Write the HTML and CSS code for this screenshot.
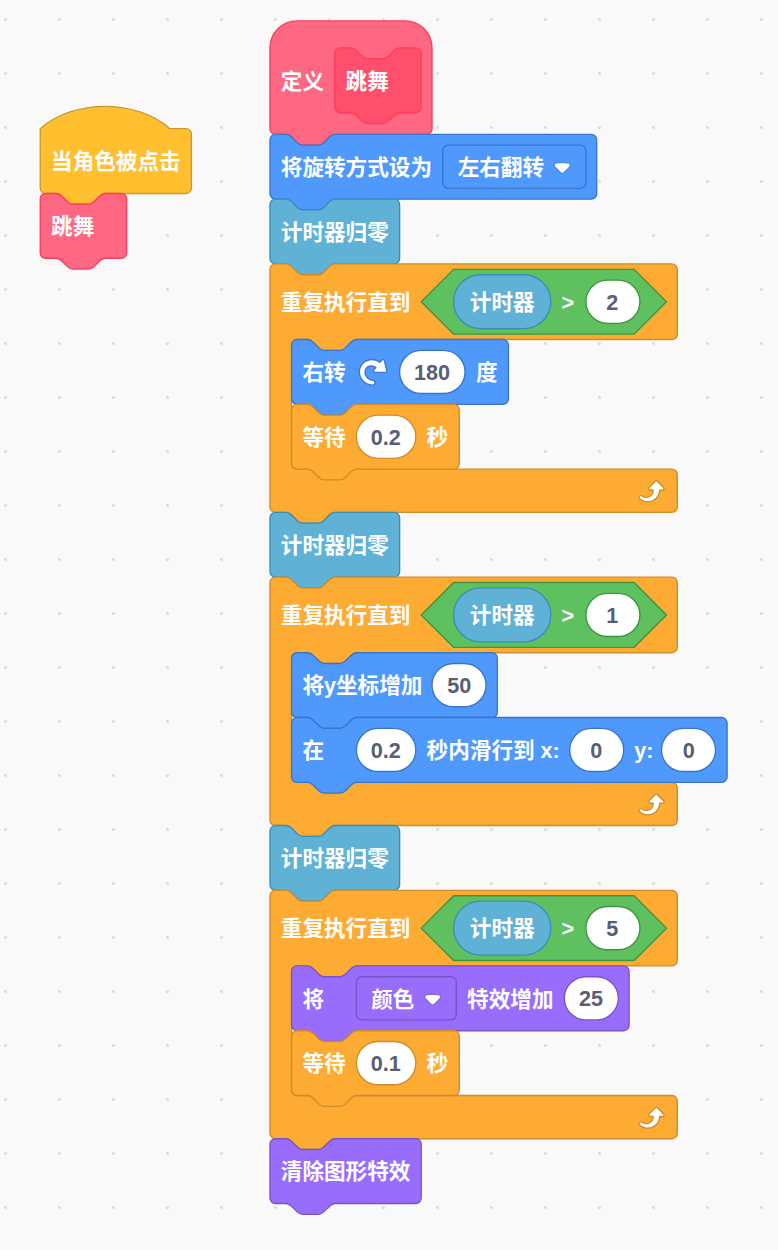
FILE: index.html
```html
<!DOCTYPE html>
<html lang="zh-CN">
<head>
<meta charset="utf-8">
<title>积木脚本</title>
<link rel="stylesheet" href="styles.css">
</head>
<body>
<svg class="defs" width="0" height="0" aria-hidden="true">
  <defs>
    <path id="stack-64" d="M0,4A4,4 0 0,1 4,0H12c2,0 3,1 4,2l4,4c1,1 2,2 4,2h12c2,0 3,-1 4,-2l4,-4c1,-1 2,-2 4,-2H60a4,4 0 0,1 4,4v40a4,4 0 0,1 -4,4H48c-2,0 -3,1 -4,2l-4,4c-1,1 -2,2 -4,2h-12c-2,0 -3,-1 -4,-2l-4,-4c-1,-1 -2,-2 -4,-2H4a4,4 0 0,1 -4,-4z"/>
    <path id="stack-96" d="M0,4A4,4 0 0,1 4,0H12c2,0 3,1 4,2l4,4c1,1 2,2 4,2h12c2,0 3,-1 4,-2l4,-4c1,-1 2,-2 4,-2H92a4,4 0 0,1 4,4v40a4,4 0 0,1 -4,4H48c-2,0 -3,1 -4,2l-4,4c-1,1 -2,2 -4,2h-12c-2,0 -3,-1 -4,-2l-4,-4c-1,-1 -2,-2 -4,-2H4a4,4 0 0,1 -4,-4z"/>
    <path id="stack-112" d="M0,4A4,4 0 0,1 4,0H12c2,0 3,1 4,2l4,4c1,1 2,2 4,2h12c2,0 3,-1 4,-2l4,-4c1,-1 2,-2 4,-2H108a4,4 0 0,1 4,4v40a4,4 0 0,1 -4,4H48c-2,0 -3,1 -4,2l-4,4c-1,1 -2,2 -4,2h-12c-2,0 -3,-1 -4,-2l-4,-4c-1,-1 -2,-2 -4,-2H4a4,4 0 0,1 -4,-4z"/>
    <path id="stack-124" d="M0,4A4,4 0 0,1 4,0H12c2,0 3,1 4,2l4,4c1,1 2,2 4,2h12c2,0 3,-1 4,-2l4,-4c1,-1 2,-2 4,-2H120.2a4,4 0 0,1 4,4v40a4,4 0 0,1 -4,4H48c-2,0 -3,1 -4,2l-4,4c-1,1 -2,2 -4,2h-12c-2,0 -3,-1 -4,-2l-4,-4c-1,-1 -2,-2 -4,-2H4a4,4 0 0,1 -4,-4z"/>
    <path id="loop-shape" d="M0,4A4,4 0 0,1 4,0H12c2,0 3,1 4,2l4,4c1,1 2,2 4,2h12c2,0 3,-1 4,-2l4,-4c1,-1 2,-2 4,-2H297.7a4,4 0 0,1 4,4v48a4,4 0 0,1 -4,4H64c-2,0 -3,1 -4,2l-4,4c-1,1 -2,2 -4,2h-12c-2,0 -3,-1 -4,-2l-4,-4c-1,-1 -2,-2 -4,-2h-8a4,4 0 0,0 -4,4v88a4,4 0 0,0 4,4H297.7a4,4 0 0,1 4,4v24a4,4 0 0,1 -4,4H48c-2,0 -3,1 -4,2l-4,4c-1,1 -2,2 -4,2h-12c-2,0 -3,-1 -4,-2l-4,-4c-1,-1 -2,-2 -4,-2H4a4,4 0 0,1 -4,-4z"/>
    <path id="hexagon" d="M24,0H157.7L181.7,24L157.7,48H24L0,24z"/>
    <rect id="pill-72" width="72" height="40" rx="20"/>
    <rect id="pill-40" width="40" height="32" rx="16"/>
    <rect id="pill-44" width="44" height="32" rx="16"/>
    <rect id="pill-48" width="48.5" height="32" rx="16"/>
  </defs>
  <symbol id="caret" viewBox="0 0 12.71 8.79">
    <path class="caret-shade" d="M12.71 2.44A2.41 2.41 0 0 1 12 4.16L8.08 8.08a2.45 2.45 0 0 1-3.45 0L.72 4.16A2.42 2.42 0 0 1 0 2.44 2.48 2.48 0 0 1 .71.71C1 .47 1.43 0 6.36 0s5.39.46 5.64.71a2.44 2.44 0 0 1 .71 1.73z"/>
    <path class="icon-face" d="M6.36 7.79a1.43 1.43 0 0 1-1-.42L1.42 3.45a1.44 1.44 0 0 1 0-2c.56-.56 9.31-.56 9.87 0a1.44 1.44 0 0 1 0 2L7.37 7.37a1.43 1.43 0 0 1-1.01.42z"/>
  </symbol>
  <symbol id="loop" viewBox="0 0 24 24">
    <path fill="#cf8b2c" d="M23.3,11c-0.3,0.6-0.9,1-1.5,1h-1.6c-0.1,1.3-0.5,2.5-1.1,3.6c-0.9,1.7-2.3,3.2-4.1,4.1c-1.7,0.9-3.6,1.2-5.5,0.9c-1.8-0.3-3.5-1.1-4.9-2.3c-0.7-0.7-0.7-1.9,0-2.6c0.6-0.6,1.6-0.7,2.3-0.2H7c0.9,0.6,1.9,0.9,2.9,0.9s1.9-0.3,2.7-0.9c1.1-0.8,1.8-2.1,1.8-3.5h-1.5c-0.9,0-1.7-0.7-1.7-1.7c0-0.4,0.2-0.9,0.5-1.2l4.4-4.4c0.7-0.6,1.7-0.6,2.4,0L23,9.2C23.5,9.7,23.6,10.4,23.3,11z"/>
    <path class="icon-face" d="M21.8,11h-2.6c0,1.5-0.3,2.9-1,4.2c-0.8,1.6-2.1,2.8-3.7,3.6c-1.5,0.8-3.3,1.1-4.9,0.8c-1.6-0.2-3.2-1-4.4-2.1c-0.4-0.3-0.4-0.9-0.1-1.2c0.3-0.4,0.9-0.4,1.2-0.1l0,0c1,0.7,2.2,1.1,3.4,1.1s2.3-0.3,3.3-1c0.9-0.6,1.6-1.5,2-2.6c0.3-0.9,0.4-1.8,0.2-2.8h-2.4c-0.4,0-0.7-0.3-0.7-0.7c0-0.2,0.1-0.3,0.2-0.4l4.4-4.4c0.3-0.3,0.7-0.3,0.9,0L22,9.8c0.3,0.3,0.4,0.6,0.3,0.9S22,11,21.8,11z"/>
  </symbol>
  <symbol id="turn-right" viewBox="0 0 24 24">
    <path fill="#3d79cc" d="M22.68,12.2a1.6,1.6,0,0,1-1.27.63H13.72a1.59,1.59,0,0,1-1.16-2.58l1.12-1.41a4.82,4.82,0,0,0-3.14-.77,4.31,4.31,0,0,0-2,.8,4.25,4.25,0,0,0-1.34,1.73,5.06,5.06,0,0,0,.54,4.62A5.58,5.58,0,0,0,12,17.74h0a2.26,2.26,0,0,1-.16,4.52A10.25,10.25,0,0,1,3.74,18,10.14,10.14,0,0,1,2.25,8.78,9.7,9.7,0,0,1,5.08,4.64,9.92,9.92,0,0,1,9.66,2.5a10.66,10.66,0,0,1,7.72,1.68l1.08-1.35a1.57,1.57,0,0,1,1.24-.6,1.6,1.6,0,0,1,1.54,1.21l1.7,7.37A1.57,1.57,0,0,1,22.68,12.2Z"/>
    <path class="icon-face" d="M21.38,11.83H13.77a.59.59,0,0,1-.43-1l1.75-2.19a5.9,5.9,0,0,0-4.7-1.58,5.07,5.07,0,0,0-4.11,3.17A6,6,0,0,0,7,15.77a6.51,6.51,0,0,0,5,2.92,1.31,1.31,0,0,1-.08,2.62,9.3,9.3,0,0,1-7.35-3.82A9.16,9.16,0,0,1,3.17,9.12,8.51,8.51,0,0,1,5.71,5.4,8.76,8.76,0,0,1,9.82,3.48a9.71,9.71,0,0,1,7.75,2.07l1.67-2.1a.59.59,0,0,1,1,.21L22,11.08A.59.59,0,0,1,21.38,11.83Z"/>
  </symbol>
</svg>

<main class="workspace">
  <section class="script script-event">
    <div class="block event">
      <svg class="shape" width="112" height="48"><path d="M0,0c25,-22 71,-22 96,0H108a4,4 0 0,1 4,4v40a4,4 0 0,1 -4,4H48c-2,0 -3,1 -4,2l-4,4c-1,1 -2,2 -4,2h-12c-2,0 -3,-1 -4,-2l-4,-4c-1,-1 -2,-2 -4,-2H4a4,4 0 0,1 -4,-4z"/></svg>
      <span class="label">当角色被点击</span>
    </div>
    <div class="block custom">
      <svg class="shape" width="64" height="48"><use href="#stack-64"/></svg>
      <span class="label">跳舞</span>
    </div>
  </section>

  <section class="script script-define">
    <div class="block define custom">
      <svg class="shape" width="120" height="84"><path d="M0,20a20,20 0 0,1 20,-20H100a20,20 0 0,1 20,20v60a4,4 0 0,1 -4,4H48c-2,0 -3,1 -4,2l-4,4c-1,1 -2,2 -4,2h-12c-2,0 -3,-1 -4,-2l-4,-4c-1,-1 -2,-2 -4,-2H4a4,4 0 0,1 -4,-4z"/></svg>
      <span class="label">定义</span>
      <div class="block prototype">
        <svg class="shape" width="64" height="48"><use href="#stack-64"/></svg>
        <span class="label">跳舞</span>
      </div>
    </div>

    <div class="block motion">
      <svg class="shape" width="242" height="48"><path d="M0,4A4,4 0 0,1 4,0H12c2,0 3,1 4,2l4,4c1,1 2,2 4,2h12c2,0 3,-1 4,-2l4,-4c1,-1 2,-2 4,-2H238a4,4 0 0,1 4,4v40a4,4 0 0,1 -4,4H48c-2,0 -3,1 -4,2l-4,4c-1,1 -2,2 -4,2h-12c-2,0 -3,-1 -4,-2l-4,-4c-1,-1 -2,-2 -4,-2H4a4,4 0 0,1 -4,-4z"/></svg>
      <span class="label">将旋转方式设为</span>
      <div class="dropdown">
        <svg class="shape" width="106" height="32"><rect width="106" height="32" rx="4"/></svg>
        <span class="label">左右翻转</span>
        <svg class="caret"><use href="#caret"/></svg>
      </div>
    </div>

    <div class="block sensing">
      <svg class="shape" width="96" height="48"><use href="#stack-96"/></svg>
      <span class="label">计时器归零</span>
    </div>

    <div class="loop control">
      <svg class="shape" width="302" height="184"><use href="#loop-shape"/></svg>
      <div class="loop-head">
        <span class="label">重复执行直到</span>
        <div class="compare operator">
          <svg class="shape" width="182" height="48"><use href="#hexagon"/></svg>
          <div class="reporter sensing"><svg class="shape" width="72" height="40"><use href="#pill-72"/></svg><span class="label">计时器</span></div>
          <span class="label gt">&gt;</span>
          <div class="value"><svg class="shape" width="40" height="32"><use href="#pill-40"/></svg><span class="number">2</span></div>
        </div>
      </div>
      <div class="loop-body">
        <div class="block motion">
          <svg class="shape" width="161" height="48"><path d="M0,4A4,4 0 0,1 4,0H12c2,0 3,1 4,2l4,4c1,1 2,2 4,2h12c2,0 3,-1 4,-2l4,-4c1,-1 2,-2 4,-2H156.6a4,4 0 0,1 4,4v40a4,4 0 0,1 -4,4H48c-2,0 -3,1 -4,2l-4,4c-1,1 -2,2 -4,2h-12c-2,0 -3,-1 -4,-2l-4,-4c-1,-1 -2,-2 -4,-2H4a4,4 0 0,1 -4,-4z"/></svg>
          <span class="label">右转</span>
          <svg class="icon"><use href="#turn-right"/></svg>
          <div class="value value-l"><svg class="shape" width="49" height="32"><use href="#pill-48"/></svg><span class="number">180</span></div>
          <span class="label">度</span>
        </div>
        <div class="block control">
          <svg class="shape" width="124" height="48"><use href="#stack-124"/></svg>
          <span class="label">等待</span>
          <div class="value value-m"><svg class="shape" width="44" height="32"><use href="#pill-44"/></svg><span class="number">0.2</span></div>
          <span class="label">秒</span>
        </div>
      </div>
      <div class="loop-foot"><svg class="icon"><use href="#loop"/></svg></div>
    </div>

    <div class="block sensing">
      <svg class="shape" width="96" height="48"><use href="#stack-96"/></svg>
      <span class="label">计时器归零</span>
    </div>

    <div class="loop control">
      <svg class="shape" width="302" height="184"><use href="#loop-shape"/></svg>
      <div class="loop-head">
        <span class="label">重复执行直到</span>
        <div class="compare operator">
          <svg class="shape" width="182" height="48"><use href="#hexagon"/></svg>
          <div class="reporter sensing"><svg class="shape" width="72" height="40"><use href="#pill-72"/></svg><span class="label">计时器</span></div>
          <span class="label gt">&gt;</span>
          <div class="value"><svg class="shape" width="40" height="32"><use href="#pill-40"/></svg><span class="number">1</span></div>
        </div>
      </div>
      <div class="loop-body">
        <div class="block motion">
          <svg class="shape" width="153" height="48"><path d="M0,4A4,4 0 0,1 4,0H12c2,0 3,1 4,2l4,4c1,1 2,2 4,2h12c2,0 3,-1 4,-2l4,-4c1,-1 2,-2 4,-2H148.4a4,4 0 0,1 4,4v40a4,4 0 0,1 -4,4H48c-2,0 -3,1 -4,2l-4,4c-1,1 -2,2 -4,2h-12c-2,0 -3,-1 -4,-2l-4,-4c-1,-1 -2,-2 -4,-2H4a4,4 0 0,1 -4,-4z"/></svg>
          <span class="label change-y">将y坐标增加</span>
          <div class="value"><svg class="shape" width="40" height="32"><use href="#pill-40"/></svg><span class="number">50</span></div>
        </div>
        <div class="block motion">
          <svg class="shape" width="323" height="48"><path d="M0,4A4,4 0 0,1 4,0H12c2,0 3,1 4,2l4,4c1,1 2,2 4,2h12c2,0 3,-1 4,-2l4,-4c1,-1 2,-2 4,-2H318.6a4,4 0 0,1 4,4v40a4,4 0 0,1 -4,4H48c-2,0 -3,1 -4,2l-4,4c-1,1 -2,2 -4,2h-12c-2,0 -3,-1 -4,-2l-4,-4c-1,-1 -2,-2 -4,-2H4a4,4 0 0,1 -4,-4z"/></svg>
          <span class="label label-first">在</span>
          <div class="value value-m"><svg class="shape" width="44" height="32"><use href="#pill-44"/></svg><span class="number">0.2</span></div>
          <span class="label glide-x">秒内滑行到 x:</span>
          <div class="value"><svg class="shape" width="40" height="32"><use href="#pill-40"/></svg><span class="number">0</span></div>
          <span class="label glide-y">y:</span>
          <div class="value"><svg class="shape" width="40" height="32"><use href="#pill-40"/></svg><span class="number">0</span></div>
        </div>
      </div>
      <div class="loop-foot"><svg class="icon"><use href="#loop"/></svg></div>
    </div>

    <div class="block sensing">
      <svg class="shape" width="96" height="48"><use href="#stack-96"/></svg>
      <span class="label">计时器归零</span>
    </div>

    <div class="loop control">
      <svg class="shape" width="302" height="184"><use href="#loop-shape"/></svg>
      <div class="loop-head">
        <span class="label">重复执行直到</span>
        <div class="compare operator">
          <svg class="shape" width="182" height="48"><use href="#hexagon"/></svg>
          <div class="reporter sensing"><svg class="shape" width="72" height="40"><use href="#pill-72"/></svg><span class="label">计时器</span></div>
          <span class="label gt">&gt;</span>
          <div class="value"><svg class="shape" width="40" height="32"><use href="#pill-40"/></svg><span class="number">5</span></div>
        </div>
      </div>
      <div class="loop-body">
        <div class="block looks">
          <svg class="shape" width="250" height="48"><path d="M0,4A4,4 0 0,1 4,0H12c2,0 3,1 4,2l4,4c1,1 2,2 4,2h12c2,0 3,-1 4,-2l4,-4c1,-1 2,-2 4,-2H246a4,4 0 0,1 4,4v40a4,4 0 0,1 -4,4H48c-2,0 -3,1 -4,2l-4,4c-1,1 -2,2 -4,2h-12c-2,0 -3,-1 -4,-2l-4,-4c-1,-1 -2,-2 -4,-2H4a4,4 0 0,1 -4,-4z"/></svg>
          <span class="label label-first">将</span>
          <div class="dropdown">
            <svg class="shape" width="74" height="32"><rect width="74" height="32" rx="4"/></svg>
            <span class="label">颜色</span>
            <svg class="caret"><use href="#caret"/></svg>
          </div>
          <span class="label">特效增加</span>
          <div class="value"><svg class="shape" width="40" height="32"><use href="#pill-40"/></svg><span class="number">25</span></div>
        </div>
        <div class="block control">
          <svg class="shape" width="124" height="48"><use href="#stack-124"/></svg>
          <span class="label">等待</span>
          <div class="value value-m"><svg class="shape" width="44" height="32"><use href="#pill-44"/></svg><span class="number">0.1</span></div>
          <span class="label">秒</span>
        </div>
      </div>
      <div class="loop-foot"><svg class="icon"><use href="#loop"/></svg></div>
    </div>

    <div class="block looks">
      <svg class="shape" width="112" height="48"><use href="#stack-112"/></svg>
      <span class="label">清除图形特效</span>
    </div>
  </section>
</main>
</body>
</html>
```
FILE: styles.css
```css
* {
  box-sizing: border-box;
}

body {
  margin: 0;
  height: 1250px;
  overflow: hidden;
  background-color: #f9f9f9;
  background-image: radial-gradient(circle at 5.5px 19.5px, #dcdcdc 1px, rgba(220, 220, 220, 0) 2px);
  background-size: 54px 54px;
}

.defs {
  position: absolute;
}

/* All block geometry is in editor units; the workspace is scaled to 135%. */
.workspace {
  display: flex;
  align-items: flex-start;
  width: 576px;
  transform: scale(1.35);
  transform-origin: 0 0;
  font: 700 16px/20px "Liberation Sans", "Noto Sans CJK SC", sans-serif;
  color: #fff;
}

.script {
  display: flex;
  flex: none;
  flex-direction: column;
  align-items: flex-start;
}

.script-event {
  width: 170px;
  margin-left: 30px;
  padding-top: 95px;
  transform: translate(-0.2px, 0.3px);
}

.script-define {
  padding-top: 15px;
  transform: translate(0, 0.5px);
}

.block {
  position: relative;
  display: flex;
  align-items: center;
  gap: 8px;
  height: 48px;
  padding: 0 8px;
}

.define {
  height: 84px;
  padding-top: 4px;
}

.shape {
  position: absolute;
  top: 0;
  left: 0;
  overflow: visible;
  fill: var(--fill);
  stroke: var(--edge);
  stroke-width: 1;
}

.label {
  transform: translateY(1.1px);
  white-space: nowrap;
}

.number {
  transform: translate(-0.2px, 0.8px);
  white-space: nowrap;
}

.define .label {
  transform: translateY(1.6px);
}

.label-first {
  width: 32px;
}

.event { --fill: #ffbf2f; --edge: #c99a2b; }
.custom { --fill: #ff6883; --edge: #ff3b5c; }
.prototype { --fill: #ff4f6d; --edge: #ff3b5c; }
.motion { --fill: #4f99fc; --edge: #3975ca; }
.sensing { --fill: #5fb1d5; --edge: #388fb7; }
.control { --fill: #fdab33; --edge: #cf8b2c; }
.operator { --fill: #5fc060; --edge: #3d953f; }
.looks { --fill: #996dfb; --edge: #7854ca; }

/* Repeat-until block */
.loop {
  position: relative;
}

.loop-head {
  display: flex;
  align-items: center;
  gap: 8px;
  height: 56px;
  padding: 0 8px;
}

.loop-body {
  display: flex;
  flex-direction: column;
  align-items: flex-start;
  width: 302px;
  padding-left: 16px;
}

.loop-foot {
  display: flex;
  align-items: center;
  justify-content: flex-end;
  width: 301px;
  height: 32px;
  padding-right: 8px;
}

.compare {
  position: relative;
  display: flex;
  align-items: center;
  gap: 8px;
  width: 182px;
  height: 48px;
  padding-left: 24px;
}

.reporter {
  position: relative;
  display: flex;
  align-items: center;
  justify-content: center;
  width: 72px;
  height: 40px;
}

.gt {
  width: 9.7px;
}

/* Fields */
.value {
  position: relative;
  display: flex;
  align-items: center;
  justify-content: center;
  width: 40px;
  height: 32px;
  color: #575e75;
}

.value .shape {
  fill: #fff;
}

.value-m {
  width: 44px;
}

.value-l {
  width: 48.5px;
}

.dropdown {
  position: relative;
  display: flex;
  align-items: center;
  gap: 7px;
  height: 32px;
  padding: 0 11px;
}

.caret {
  width: 13px;
  height: 9px;
  margin-left: -0.5px;
  transform: translateY(0.4px);
}

.dropdown .caret {
  margin-right: 0.5px;
}

.caret-shade {
  fill: #231f20;
  opacity: 0.1;
}

.icon {
  position: relative;
  width: 24px;
  height: 24px;
}

.caret,
.icon {
  flex: none;
}

.icon-face {
  fill: #fff;
}

.change-y {
  width: 88.4px;
}

.glide-x {
  width: 97.8px;
}

.glide-y {
  width: 12.6px;
}
```
